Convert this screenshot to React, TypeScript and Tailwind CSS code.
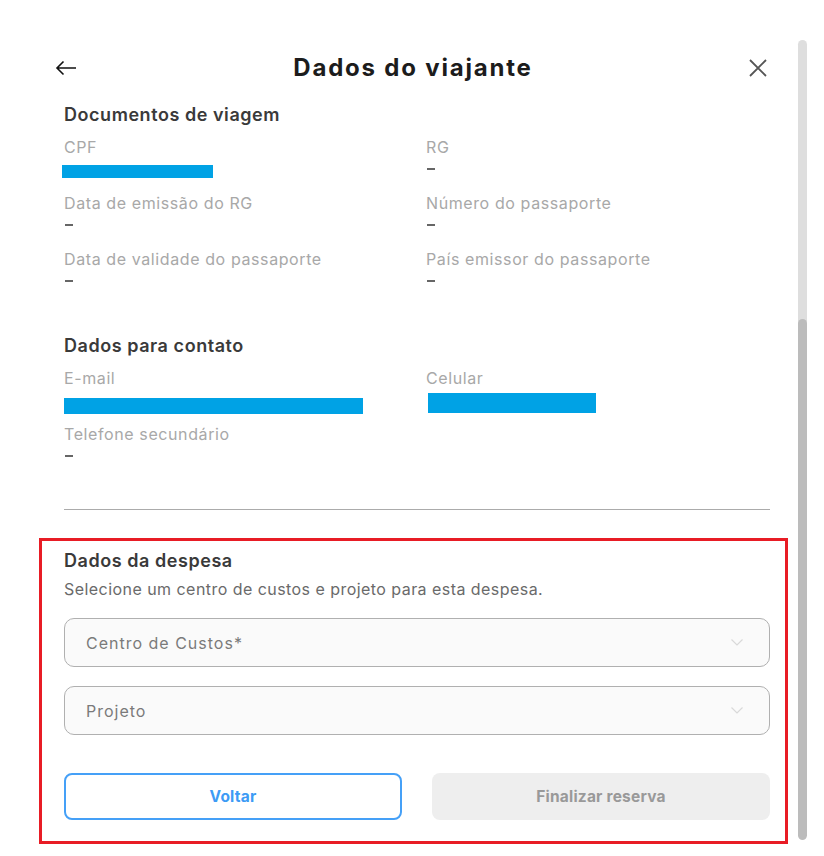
import React from "react";

const font = { fontFamily: "Inter, 'Noto Sans', sans-serif" };

function Field({ label, children }: { label: string; children: React.ReactNode }) {
  return (
    <div className="flex flex-col">
      <div className="h-[22px] leading-[22px] text-[16px] tracking-[0.6px] text-[#a8a8a8] whitespace-nowrap">{label}</div>
      <div className="h-[22px] flex items-center">{children}</div>
    </div>
  );
}

function Dash() {
  return <div className="w-[8px] h-[2px] bg-[#666666] ml-[1px]" />;
}

function Chevron() {
  return (
    <svg width="12" height="7" viewBox="0 0 12 7" fill="none">
      <path d="M0.5 0.5L6 6L11.5 0.5" stroke="#d9d9d9" strokeWidth="1.2" />
    </svg>
  );
}

function Select({ label }: { label: string }) {
  return (
    <div className="h-[49px] rounded-[10px] border border-[#b0b0b0] bg-[#fafafa] flex items-center justify-between pl-[21px] pr-[26px]">
      <span className="text-[16px] tracking-[1px] text-[#7a7a7a]">{label}</span>
      <Chevron />
    </div>
  );
}

export default function App() {
  return (
    <div className="w-[824px] h-[856px] bg-white flex" style={font}>
      <div className="w-[798px] flex flex-col pl-[39px] pr-[10px]">
        {/* header */}
        <div className="mt-[44px] h-[48px] flex items-center justify-between pl-[16px] pr-[21px]">
          <svg width="22" height="16" viewBox="0 0 22 16" fill="none">
            <path d="M21 8H2M8.5 1.5L2 8L8.5 14.5" stroke="#111" strokeWidth="1.6" />
          </svg>
          <div className="text-[24px] font-bold text-[#1c1c1c] tracking-[1.8px]">Dados do viajante</div>
          <svg width="18" height="18" viewBox="0 0 18 18" fill="none">
            <path d="M1 1L17 17M17 1L1 17" stroke="#555" strokeWidth="1.8" />
          </svg>
        </div>

        <div className="pl-[25px] pr-[18px] flex flex-col">
          <div className="mt-[11px] h-[24px] leading-[24px] text-[18px] tracking-[0.55px] font-semibold text-[#3a3a3a]">Documentos de viagem</div>
          <div className="mt-[9px] grid grid-cols-2 gap-x-[0px] gap-y-[12px]">
            <Field label="CPF">
              <div className="w-[151px] h-[13px] bg-[#00a2e5] -ml-[2px] mt-[5px]" />
            </Field>
            <div className="pl-[9px]"><Field label="RG"><Dash /></Field></div>
            <Field label="Data de emissão do RG"><Dash /></Field>
            <div className="pl-[9px]"><Field label="Número do passaporte"><Dash /></Field></div>
            <Field label="Data de validade do passaporte"><Dash /></Field>
            <div className="pl-[9px]"><Field label="País emissor do passaporte"><Dash /></Field></div>
          </div>

          <div className="mt-[42px] h-[24px] leading-[24px] text-[18px] tracking-[0.55px] font-semibold text-[#3a3a3a]">Dados para contato</div>
          <div className="mt-[9px] grid grid-cols-2 gap-y-[12px]">
            <Field label="E-mail">
              <div className="w-[299px] h-[16px] bg-[#00a2e5] mt-[12px]" />
            </Field>
            <div className="pl-[9px]">
              <Field label="Celular">
                <div className="w-[168px] h-[20px] bg-[#00a2e5] mt-[5px] ml-[2px]" />
              </Field>
            </div>
            <Field label="Telefone secundário"><Dash /></Field>
          </div>

          <div className="mt-[42px] h-px bg-[#ababab]" />
        </div>

        <div className="mt-[28px] border-[3px] border-[#e81c25] pl-[22px] pr-[15px] pt-[8px] pb-[21px] flex flex-col">
          <div className="h-[24px] leading-[24px] text-[18px] tracking-[0.55px] font-semibold text-[#3a3a3a]">Dados da despesa</div>
          <div className="mt-[5px] h-[22px] leading-[22px] text-[16px] text-[#6a6a6a] tracking-[0.45px] whitespace-nowrap">
            Selecione um centro de custos e projeto para esta despesa.
          </div>
          <div className="mt-[18px]"><Select label="Centro de Custos*" /></div>
          <div className="mt-[19px]"><Select label="Projeto" /></div>
          <div className="mt-[38px] grid grid-cols-2 gap-[30px]">
            <div className="h-[47px] rounded-[8px] border-2 border-[#45a0f7] flex items-center justify-center text-[15.5px] tracking-[0.2px] font-bold text-[#3d9bf5]">
              Voltar
            </div>
            <div className="h-[47px] rounded-[8px] bg-[#eeeeee] flex items-center justify-center text-[15.5px] tracking-[0.2px] font-bold text-[#999999]">
              Finalizar reserva
            </div>
          </div>
        </div>
      </div>

      <div className="w-[9px] mt-[40px] h-[800px] rounded-full bg-[#dedede] flex flex-col overflow-hidden">
        <div className="h-[279px]" />
        <div className="flex-1 rounded-full bg-[#bcbcbc]" />
      </div>
    </div>
  );
}
